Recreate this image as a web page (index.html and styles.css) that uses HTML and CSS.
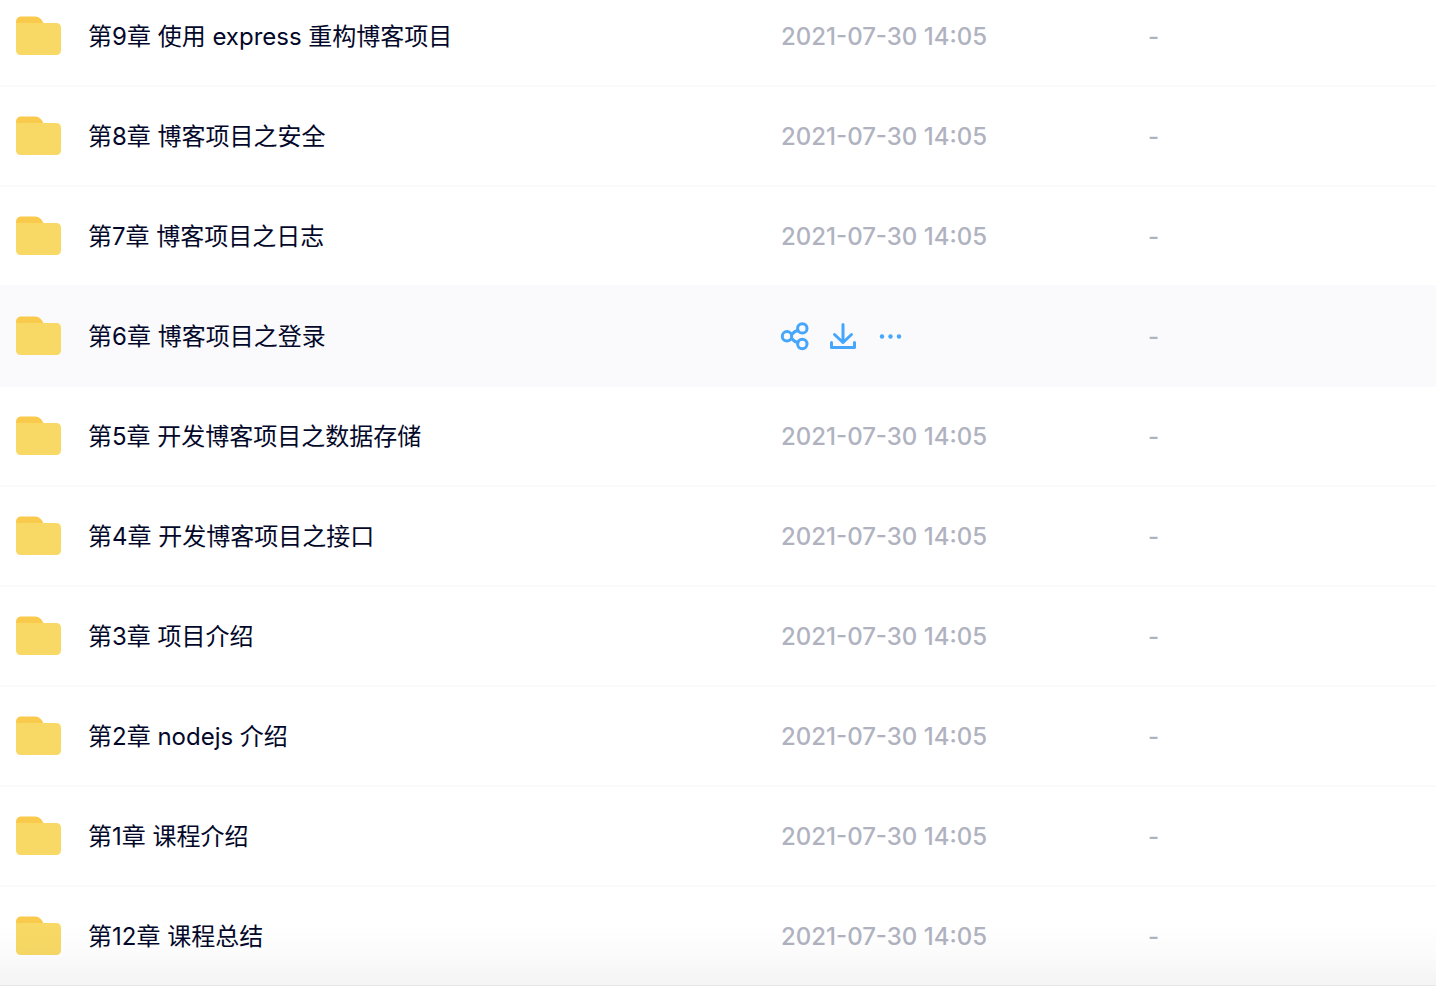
FILE: index.html
```
<!DOCTYPE html>
<html lang="zh-CN">

<head>
    <meta charset="UTF-8" />
    <meta name="viewport" content="width=device-width, initial-scale=1.0" />
    <title>文件列表</title>
    <link rel="stylesheet" href="styles.css">
</head>

<body>
    <svg class="sprite" aria-hidden="true">
        <symbol id="folder" viewBox="0 0 46 40">
            <path fill="#f9ca4b" d="M0 12V5.500a5 5 0 0 1 5-5h13c5 0 7 2 9.500 6.500v5z" />
            <path fill="#f8d965" d="M0 7h40.500a4.500 4.500 0 0 1 4.500 4.500V34.500a4.500 4.500 0 0 1-4.500 4.500h-36A4.500 4.500 0 0 1 0 34.500z" />
        </symbol>
    </svg>

    <main class="file-list">
        <table class="file-table">
            <colgroup>
                <col>
                <col class="col-date">
                <col class="col-size">
            </colgroup>
            <tbody>
                <tr>
                    <td><div class="name"><svg class="folder"><use href="#folder" /></svg><span>第9章 使用 express 重构博客项目</span></div></td>
                    <td class="date">2021-07-30 14:05</td>
                    <td class="size">-</td>
                </tr>
                <tr>
                    <td><div class="name"><svg class="folder"><use href="#folder" /></svg><span>第8章 博客项目之安全</span></div></td>
                    <td class="date">2021-07-30 14:05</td>
                    <td class="size">-</td>
                </tr>
                <tr>
                    <td><div class="name"><svg class="folder"><use href="#folder" /></svg><span>第7章 博客项目之日志</span></div></td>
                    <td class="date">2021-07-30 14:05</td>
                    <td class="size">-</td>
                </tr>
                <tr class="active">
                    <td><div class="name"><svg class="folder"><use href="#folder" /></svg><span>第6章 博客项目之登录</span></div></td>
                    <td>
                        <div class="actions">
                            <button type="button" aria-label="分享">
                                <svg viewBox="0 0 28 28">
                                    <circle cx="6" cy="14.300" r="4.700" />
                                    <circle cx="21.300" cy="6.400" r="4.700" />
                                    <circle cx="21.300" cy="22" r="4.700" />
                                    <path d="M10.500 12.500l3.500-3 3-1M10.500 16.500l3.500 3 3 1" />
                                </svg>
                            </button>
                            <button type="button" aria-label="下载">
                                <svg viewBox="0 0 28 28">
                                    <path d="M14 2.500v18M5.500 12.500l8.500 8 8.500-8M2.500 20.500v5h23v-5" />
                                </svg>
                            </button>
                            <button type="button" aria-label="更多">
                                <svg class="dots" viewBox="0 0 28 28">
                                    <circle cx="5" cy="14.500" r="2.200" />
                                    <circle cx="13.500" cy="14.500" r="2.200" />
                                    <circle cx="22" cy="14.500" r="2.200" />
                                </svg>
                            </button>
                        </div>
                    </td>
                    <td class="size">-</td>
                </tr>
                <tr>
                    <td><div class="name"><svg class="folder"><use href="#folder" /></svg><span>第5章 开发博客项目之数据存储</span></div></td>
                    <td class="date">2021-07-30 14:05</td>
                    <td class="size">-</td>
                </tr>
                <tr>
                    <td><div class="name"><svg class="folder"><use href="#folder" /></svg><span>第4章 开发博客项目之接口</span></div></td>
                    <td class="date">2021-07-30 14:05</td>
                    <td class="size">-</td>
                </tr>
                <tr>
                    <td><div class="name"><svg class="folder"><use href="#folder" /></svg><span>第3章 项目介绍</span></div></td>
                    <td class="date">2021-07-30 14:05</td>
                    <td class="size">-</td>
                </tr>
                <tr>
                    <td><div class="name"><svg class="folder"><use href="#folder" /></svg><span>第2章 nodejs 介绍</span></div></td>
                    <td class="date">2021-07-30 14:05</td>
                    <td class="size">-</td>
                </tr>
                <tr>
                    <td><div class="name"><svg class="folder"><use href="#folder" /></svg><span>第1章 课程介绍</span></div></td>
                    <td class="date">2021-07-30 14:05</td>
                    <td class="size">-</td>
                </tr>
                <tr>
                    <td><div class="name"><svg class="folder"><use href="#folder" /></svg><span>第12章 课程总结</span></div></td>
                    <td class="date">2021-07-30 14:05</td>
                    <td class="size">-</td>
                </tr>
            </tbody>
        </table>
        <div class="fade"></div>
    </main>
</body>

</html>
```

FILE: styles.css
```
* {
    margin: 0;
    padding: 0;
    box-sizing: border-box;
}

body {
    background-color: #fff;
    font-family: Inter, "Noto Sans CJK SC", sans-serif;
    font-size: 24px;
    line-height: 36px;
    color: #03082a;
}

.sprite {
    display: none;
}

.file-list {
    position: relative;
    height: 100vh;
    overflow: hidden;
}

/* the list is scrolled a little, the first row is cut at the top */
.file-table {
    width: 100%;
    margin-top: -13px;
    table-layout: fixed;
    border-collapse: separate;
    border-spacing: 0;
}

.col-date {
    width: 367px;
}

.col-size {
    width: 288px;
}

td {
    height: 100px;
    border-bottom: 2px solid #fafafc;
    vertical-align: middle;
}

.active td {
    background-color: #fafafc;
}

.name {
    display: flex;
    align-items: center;
    gap: 26px;
    padding-left: 16px;
}

.name span {
    padding-top: 2px;
}

.folder {
    width: 46px;
    height: 40px;
}

.date,
.size {
    padding-top: 2px;
    font-weight: 500;
    color: #b0b3bf;
}

.actions {
    display: flex;
    align-items: center;
    gap: 20px;
}

.actions button {
    width: 28px;
    height: 28px;
    border: none;
    background: none;
    cursor: pointer;
}

.actions svg {
    display: block;
    width: 28px;
    height: 28px;
    overflow: visible;
    fill: none;
    stroke: #45a6fb;
    stroke-width: 3;
    stroke-linecap: round;
    stroke-linejoin: round;
}

.actions .dots {
    fill: #45a6fb;
    stroke: none;
}

.fade {
    position: absolute;
    left: 0;
    right: 0;
    bottom: 0;
    height: 64px;
    border-bottom: 1px solid #e6e6e6;
    background: linear-gradient(rgba(0, 0, 0, 0), rgba(0, 0, 0, 0.015) 50%, rgba(0, 0, 0, 0.045));
    pointer-events: none;
}
```
